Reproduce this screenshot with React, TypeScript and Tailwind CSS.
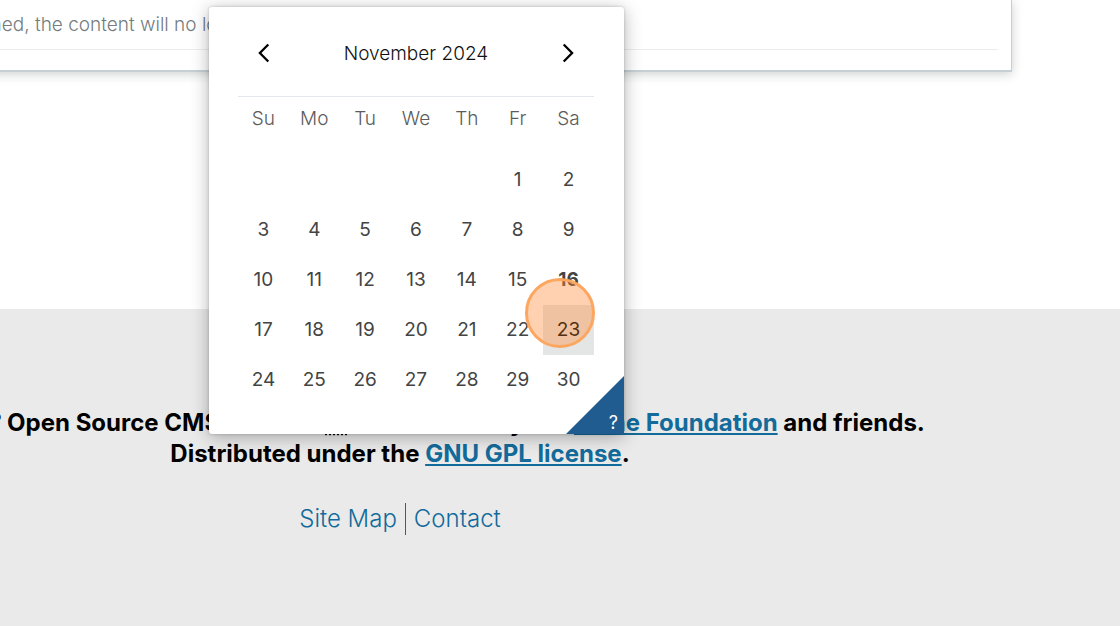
import React from "react";

const weekdays = [
  ["Su", "Sunday"],
  ["Mo", "Monday"],
  ["Tu", "Tuesday"],
  ["We", "Wednesday"],
  ["Th", "Thursday"],
  ["Fr", "Friday"],
  ["Sa", "Saturday"],
];

const weeks: (number | null)[][] = [
  [null, null, null, null, null, 1, 2],
  [3, 4, 5, 6, 7, 8, 9],
  [10, 11, 12, 13, 14, 15, 16],
  [17, 18, 19, 20, 21, 22, 23],
  [24, 25, 26, 27, 28, 29, 30],
];

const TODAY = 16;
const HOVERED = 23;

function dayClass(day: number) {
  if (day === TODAY) return "h-full w-full font-bold";
  if (day === HOVERED) return "h-full w-full bg-[#e4e6e6] text-[#54300f]";
  return "h-full w-full";
}

function Chevron({ points }: { points: string }) {
  return (
    <svg width="12" height="20" viewBox="0 0 12 20" fill="none" aria-hidden="true">
      <polyline points={points} stroke="#000" strokeWidth="2.3" />
    </svg>
  );
}

function Calendar() {
  return (
    <section
      aria-label="Choose a date"
      className="absolute top-[7px] left-[209px] w-[415px] rounded-[3px] bg-white pr-[30px] pb-[29px] pl-[29px] shadow-[0_3px_18px_rgba(0,0,0,0.3),0_0_3px_rgba(0,0,0,0.2)]"
    >
      <header className="flex h-[90px] items-center justify-between border-b border-[#e4e8ec] px-5 pt-0.5">
        <button type="button" aria-label="Previous month">
          <Chevron points="10.3,1.5 1.9,10 10.3,18.5" />
        </button>
        <h2 className="pt-1 text-[19px] font-light text-[#111]">November 2024</h2>
        <button type="button" aria-label="Next month">
          <Chevron points="1.7,1.5 10.1,10 1.7,18.5" />
        </button>
      </header>
      <table className="w-full table-fixed border-collapse text-[19px] text-[#444]">
        <thead>
          <tr>
            {weekdays.map(([short, full]) => (
              <th
                key={short}
                abbr={full}
                scope="col"
                className="h-[58px] pt-2 align-top font-light text-[#5c5c5c]"
              >
                {short}
              </th>
            ))}
          </tr>
        </thead>
        <tbody>
          {weeks.map((week, i) => (
            <tr key={i}>
              {week.map((day, j) => (
                <td key={j} className="h-[50px] p-0 text-center">
                  {day !== null && (
                    <button type="button" className={dayClass(day)}>
                      <span className={day === HOVERED ? "relative z-10" : undefined}>{day}</span>
                    </button>
                  )}
                </td>
              ))}
            </tr>
          ))}
        </tbody>
      </table>
      <button
        type="button"
        aria-label="Keyboard shortcuts"
        className="absolute right-0 bottom-0 h-[58px] w-[58px] bg-[#205c90] [clip-path:polygon(100%_0,100%_100%,0_100%)]"
      >
        <span className="absolute right-[6px] bottom-0 text-[18px] leading-[23px] text-white">
          ?
        </span>
      </button>
      <span
        aria-hidden="true"
        className="pointer-events-none absolute top-[271px] left-[316px] h-[70px] w-[70px] rounded-full border-[3px] border-[#fca65f] bg-[#ff8c3c]/40"
      />
    </section>
  );
}

export default function App() {
  return (
    <div className="relative min-h-screen overflow-hidden bg-white font-['Inter','Liberation_Sans',sans-serif]">
      <div className="-ml-80 flex min-h-screen flex-col">
        <main className="pr-[108px] pb-[237px] pl-[102px]">
          <div className="border-r border-b-2 border-[#c6d0d4] px-[13px] pb-5 shadow-[0_2px_10px_rgba(34,36,38,0.22)]">
            <p className="border-b border-[#ededed] pt-[13px] pb-3 text-[19px] leading-6 font-light text-[#737c80]">
              When this date is reached, the content will no longer be visible in listings and
              searches.
            </p>
          </div>
        </main>
        <footer className="flex grow flex-col items-center bg-[#eaeaea] pt-[98px]">
          <p className="text-center text-[24px] leading-[31px] font-bold text-black">
            The Plone
            <sup className="text-[14px]">®</sup> Open Source CMS/WCM is{" "}
            <abbr title="Copyright">©</abbr> 2000-2024 by the{" "}
            <a href="#foundation" className="text-[#126b9a] underline underline-offset-2">
              Plone Foundation
            </a>{" "}
            and friends.
            <br />
            Distributed under the{" "}
            <a href="#license" className="text-[#126b9a] underline underline-offset-2">
              GNU GPL license
            </a>
            .
          </p>
          <nav aria-label="Footer" className="mt-[34px] text-[24px] leading-8 font-light text-[#126b9a]">
            <ul className="flex">
              <li className="border-r border-[#126b9a] pr-2">
                <a href="#sitemap">Site Map</a>
              </li>
              <li className="pl-2">
                <a href="#contact">Contact</a>
              </li>
            </ul>
          </nav>
        </footer>
      </div>
      <Calendar />
    </div>
  );
}
